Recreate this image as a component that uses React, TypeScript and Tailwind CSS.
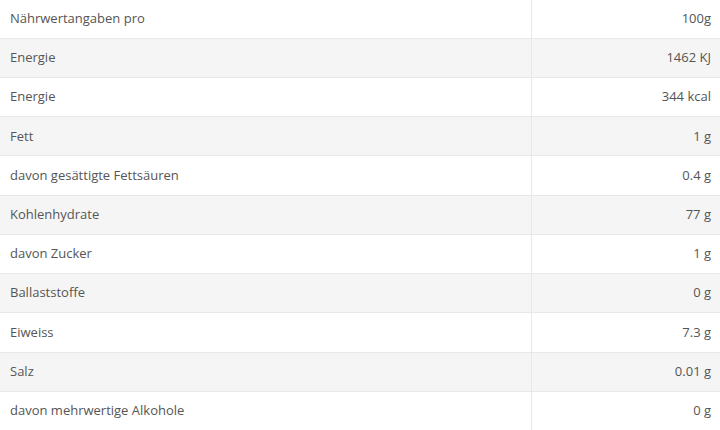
import React from "react";

const rows: [string, string][] = [
  ["Nährwertangaben pro", "100g"],
  ["Energie", "1462 KJ"],
  ["Energie", "344 kcal"],
  ["Fett", "1 g"],
  ["davon gesättigte Fettsäuren", "0.4 g"],
  ["Kohlenhydrate", "77 g"],
  ["davon Zucker", "1 g"],
  ["Ballaststoffe", "0 g"],
  ["Eiweiss", "7.3 g"],
  ["Salz", "0.01 g"],
  ["davon mehrwertige Alkohole", "0 g"],
];

export default function App() {
  return (
    <div className="w-[720px] h-[430px] overflow-hidden bg-white font-['Open_Sans',sans-serif] text-[13px] text-[#555]">
      <table className="w-full h-[431px] border-collapse">
        <tbody>
          {rows.map(([label, value], i) => (
            <tr
              key={i}
              className={`${i % 2 === 1 ? "bg-[#f5f5f5]" : "bg-white"} border-b border-[#e8e8e8]`}
            >
              <td className="w-[531px] pl-[10px] align-middle p-0">{label}</td>
              <td className="pr-[9px] text-right align-middle border-l border-[#e8e8e8] p-0">
                {value}
              </td>
            </tr>
          ))}
        </tbody>
      </table>
    </div>
  );
}
